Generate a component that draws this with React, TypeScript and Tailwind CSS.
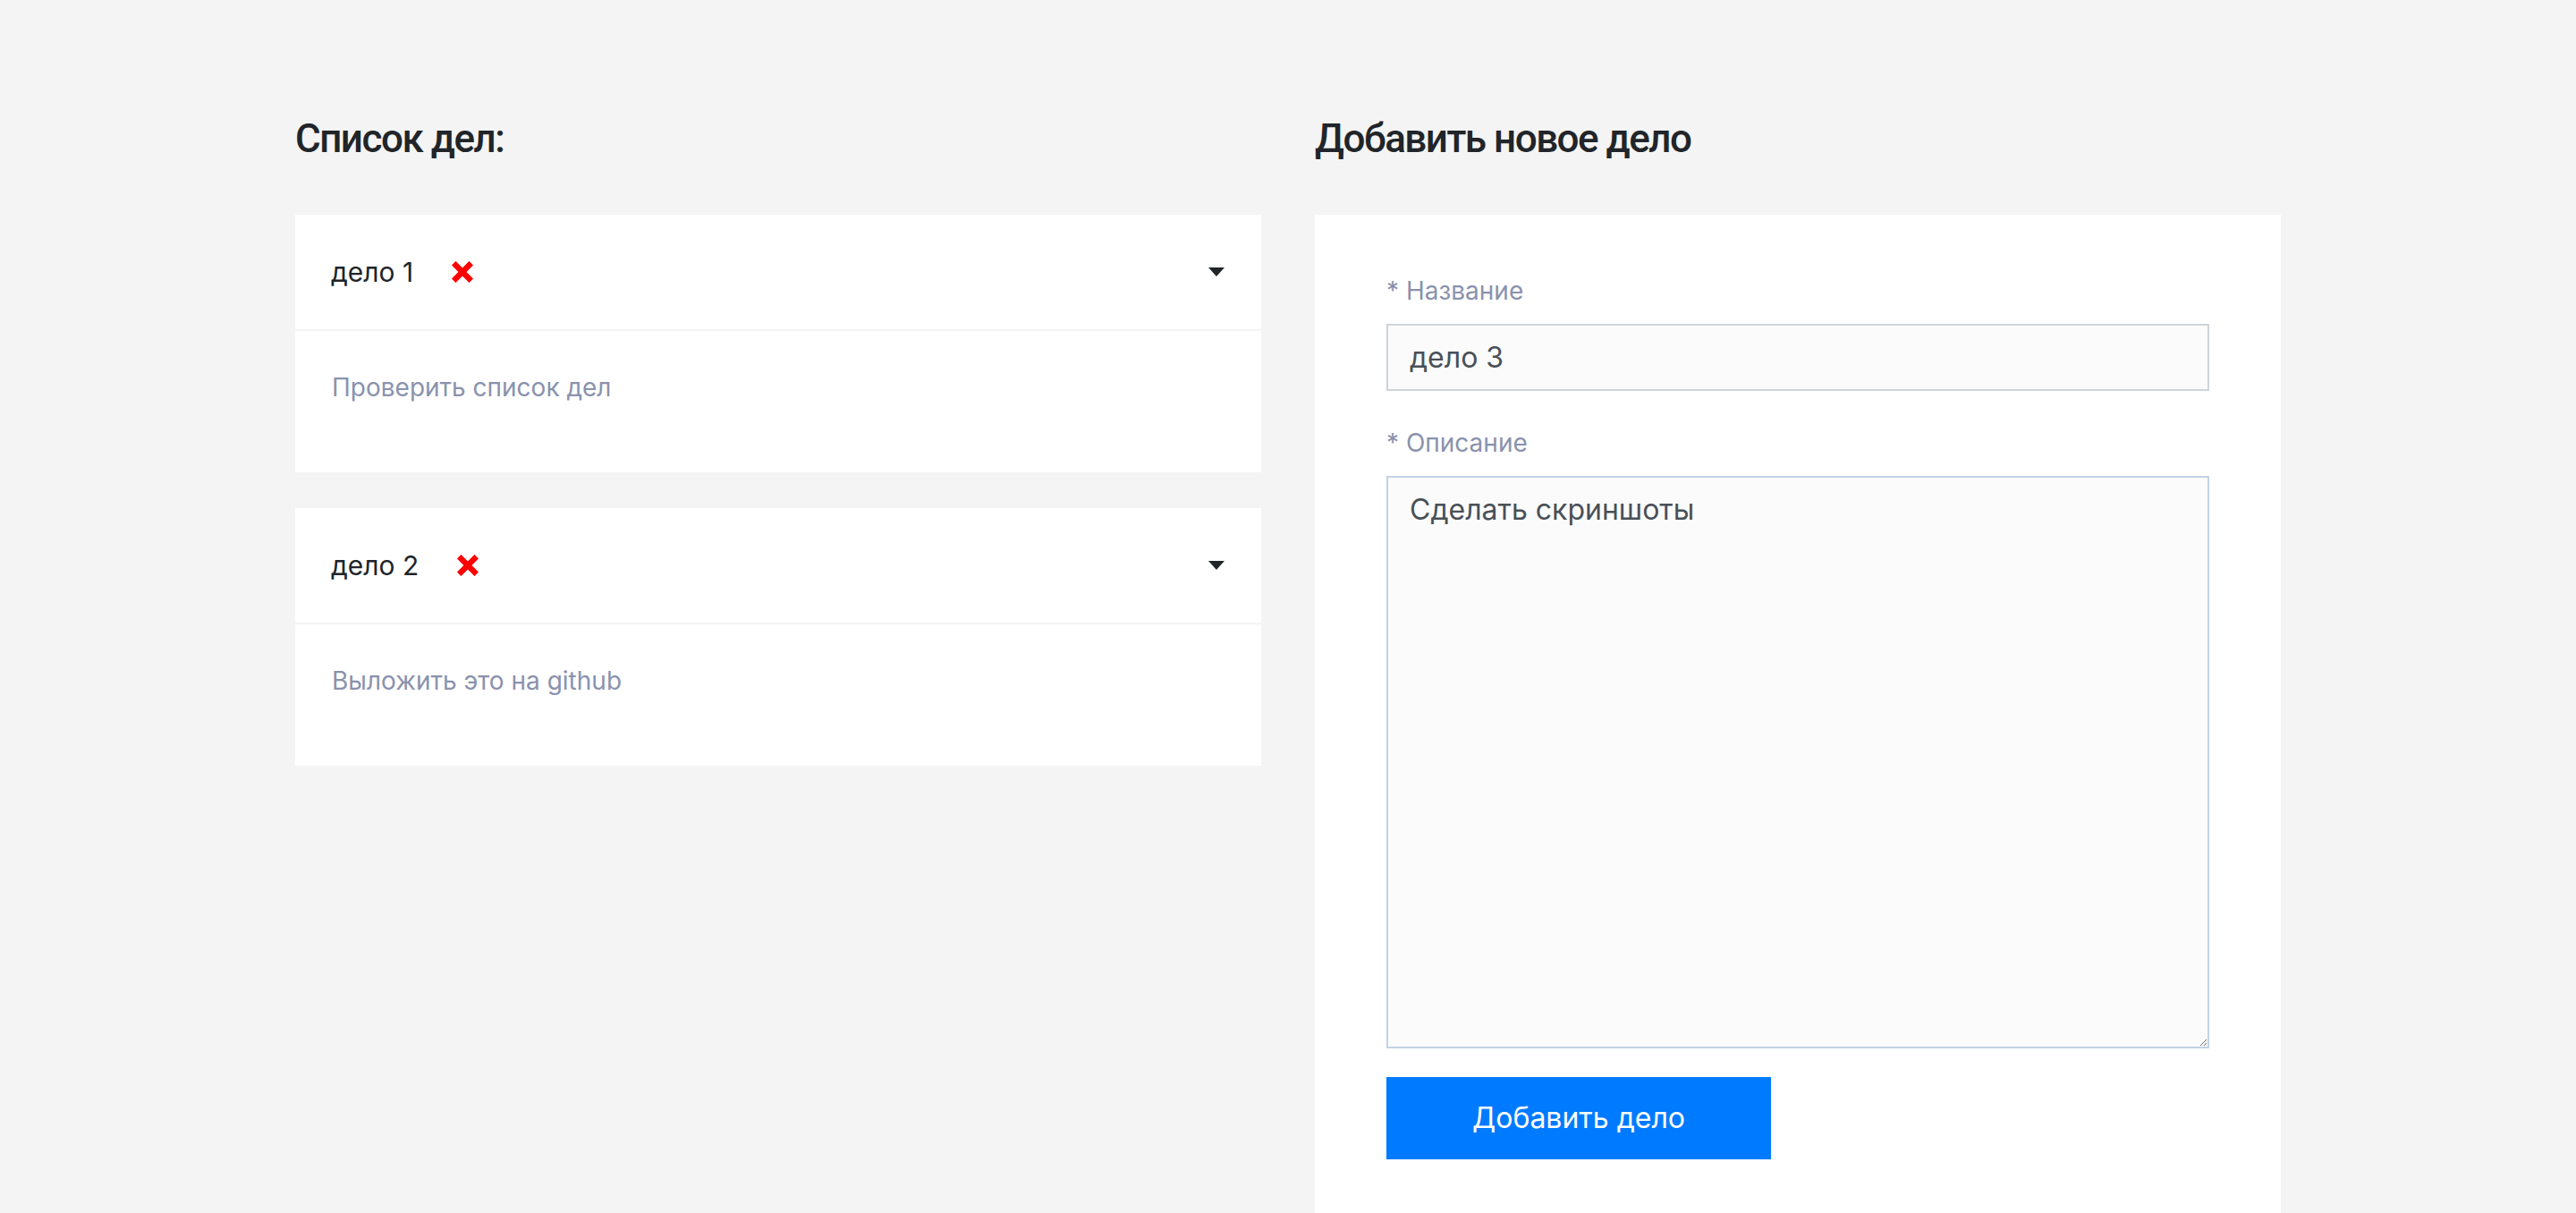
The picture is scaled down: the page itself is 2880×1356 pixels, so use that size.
import { useState } from "react";

type Todo = {
  id: number;
  title: string;
  description: string;
};

const initialTodos: Todo[] = [
  { id: 1, title: "дело 1", description: "Проверить список дел" },
  { id: 2, title: "дело 2", description: "Выложить это на github" },
];

function RemoveIcon() {
  return (
    <svg viewBox="0 0 24 24" className="w-[24px] h-[24px]" fill="none">
      <path d="M4.5 4.5L19.5 19.5M19.5 4.5L4.5 19.5" stroke="#ff0000" strokeWidth={6.5} strokeLinecap="square" />
    </svg>
  );
}

function Caret() {
  return (
    <svg viewBox="0 0 18 10" className="w-[18px] h-[10px]">
      <polygon points="0,0 18,0 9,10" fill="#212529" />
    </svg>
  );
}

function TodoCard({ todo }: { todo: Todo }) {
  return (
    <div className="bg-white">
      <div className="h-[130px] flex items-center justify-between pl-[40px] pr-[41px] border-b-2 border-[#f4f4f4]">
        <div className="flex items-center">
          <span className="text-[30px] leading-[40px] text-[#212529]">{todo.title}</span>
          <button className="ml-[43px] flex items-center">
            <RemoveIcon />
          </button>
        </div>
        <button className="flex items-center">
          <Caret />
        </button>
      </div>
      <div className="h-[158px] px-[41px] pt-[42px]">
        <p className="text-[28px] leading-[42px] text-[#8a92ad]">{todo.description}</p>
      </div>
    </div>
  );
}

export default function App() {
  const [todos] = useState<Todo[]>(initialTodos);

  return (
    <div className="min-h-screen bg-[#f4f4f4] font-['Inter',sans-serif] antialiased">
      <div className="w-[2220px] mx-auto pt-[129px] grid grid-cols-2 gap-[60px] items-start">
        <div>
          <h2 className="font-['Roboto',sans-serif] text-[44px] leading-[52px] font-medium tracking-[-1.5px] text-[#212529] mb-[59px]">
            Список дел:
          </h2>
          <div className="flex flex-col gap-[40px]">
            {todos.map((todo) => (
              <TodoCard key={todo.id} todo={todo} />
            ))}
          </div>
        </div>

        <div>
          <h2 className="font-['Roboto',sans-serif] text-[44px] leading-[52px] font-medium tracking-[-1.5px] text-[#212529] mb-[59px]">
            Добавить новое дело
          </h2>
          <form className="bg-white px-[80px] pt-[64px] pb-[80px]">
            <label className="block text-[28px] leading-[42px] text-[#8a92ad] mb-[16px]">* Название</label>
            <input
              type="text"
              defaultValue="дело 3"
              className="block w-full h-[75px] px-[24px] text-[32px] text-[#495057] bg-[#fbfbfb] border-2 border-[#ced4da] outline-none"
            />
            <label className="block text-[28px] leading-[42px] text-[#8a92ad] mt-[37px] mb-[16px]">* Описание</label>
            <textarea
              defaultValue="Сделать скриншоты"
              className="block w-full h-[640px] px-[24px] pt-[12px] text-[32px] leading-[48px] text-[#495057] bg-[#fbfbfb] border-2 border-[#c3d2e4] outline-none"
            />
            <button
              type="button"
              className="mt-[32px] w-[430px] h-[92px] bg-[#007bff] text-white text-[32px] leading-[40px]"
            >
              Добавить дело
            </button>
          </form>
        </div>
      </div>
    </div>
  );
}
